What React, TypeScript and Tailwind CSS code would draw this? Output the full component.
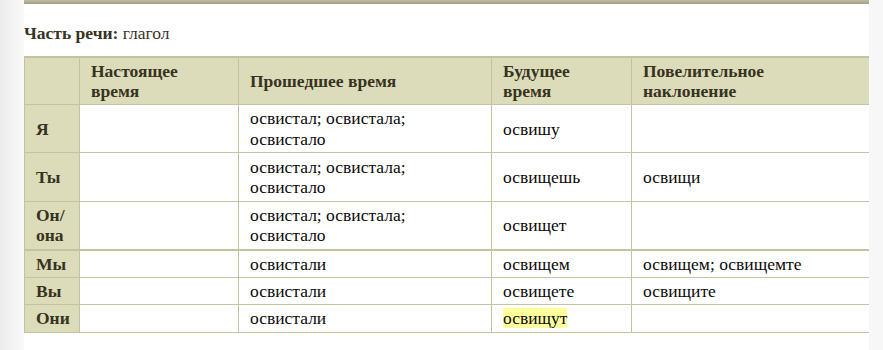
import React from "react";

type Row = {
  p: React.ReactNode;
  past: React.ReactNode;
  fut: React.ReactNode;
  imp: React.ReactNode;
  thick?: boolean;
  tall?: boolean;
};

const past2 = (
  <>
    освистал; освистала;
    <br />
    освистало
  </>
);

const rows: Row[] = [
  { p: "Я", past: past2, fut: "освишу", imp: "", tall: true },
  { p: "Ты", past: past2, fut: "освищешь", imp: "освищи", tall: true },
  {
    p: (
      <>
        Он/
        <br />
        она
      </>
    ),
    past: past2,
    fut: "освищет",
    imp: "",
    tall: true,
  },
  { p: "Мы", past: "освистали", fut: "освищем", imp: "освищем; освищемте", thick: true },
  { p: "Вы", past: "освистали", fut: "освищете", imp: "освищите" },
  {
    p: "Они",
    past: "освистали",
    fut: <span className="inline-block bg-[#ffff9e] leading-[20px]">освищут</span>,
    imp: "",
  },
];

export default function App() {
  const base = "border border-[#c4c3a0] px-[11px] text-left align-middle font-['Liberation_Serif','Times_New_Roman',serif]";
  const th = base + " bg-[#dddcba] font-bold text-[#36331f]";
  const td = base + " bg-white text-[#0a0a0a]";
  return (
    <div className="flex min-h-[350px] w-[883px] bg-white font-['Liberation_Serif','Times_New_Roman',serif]">
      <div className="w-[24px] shrink-0 bg-gradient-to-r from-[#ececec] to-[#f9f9f9]" />
      <div className="w-[845px] shrink-0 bg-white">
        <div className="h-[4px] bg-gradient-to-b from-[#c2bea5] to-[#a29e85]" />
        <p className="mt-[19px] text-[17.5px] leading-[20.5px] text-[#36331f] font-['Liberation_Serif','Times_New_Roman',serif]">
          <span className="font-bold">Часть речи:</span> глагол
        </p>
        <table className="mt-[12px] w-[845px] table-fixed border-collapse border-t-2 border-[#c4c3a0] text-[17.5px] leading-[20.25px] font-['Liberation_Serif','Times_New_Roman',serif]">
          <colgroup>
            <col className="w-[55px]" />
            <col className="w-[159px]" />
            <col className="w-[253px]" />
            <col className="w-[140px]" />
            <col className="w-[238px]" />
          </colgroup>
          <thead>
            <tr>
              <th className={th + " border-t-2 py-[3px]"}></th>
              <th className={th + " border-t-2 py-[3px]"}>
                Настоящее
                <br />
                время
              </th>
              <th className={th + " border-t-2 py-[3px]"}>Прошедшее время</th>
              <th className={th + " border-t-2 py-[3px]"}>
                Будущее
                <br />
                время
              </th>
              <th className={th + " border-t-2 py-[3px]"}>
                Повелительное
                <br />
                наклонение
              </th>
            </tr>
          </thead>
          <tbody>
            {rows.map((r, i) => {
              const t = (r.thick ? " border-t-2" : "") + (r.tall ? " py-[3.4px]" : " py-[3px]");
              return (
                <tr key={i}>
                  <th className={th + t}>{r.p}</th>
                  <td className={td + t}></td>
                  <td className={td + t}>{r.past}</td>
                  <td className={td + t}>{r.fut}</td>
                  <td className={td + t}>{r.imp}</td>
                </tr>
              );
            })}
          </tbody>
        </table>
      </div>
      <div className="flex-1 bg-[#f7f7f7]" />
    </div>
  );
}
